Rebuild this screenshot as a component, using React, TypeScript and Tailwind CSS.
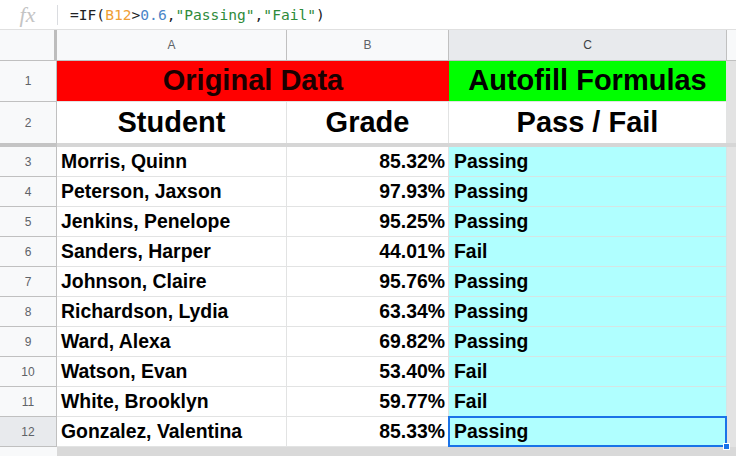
import React from 'react'

const rows = [
    { n: 3, name: 'Morris, Quinn', grade: '85.32%', result: 'Passing' },
    { n: 4, name: 'Peterson, Jaxson', grade: '97.93%', result: 'Passing' },
    { n: 5, name: 'Jenkins, Penelope', grade: '95.25%', result: 'Passing' },
    { n: 6, name: 'Sanders, Harper', grade: '44.01%', result: 'Fail' },
    { n: 7, name: 'Johnson, Claire', grade: '95.76%', result: 'Passing' },
    { n: 8, name: 'Richardson, Lydia', grade: '63.34%', result: 'Passing' },
    { n: 9, name: 'Ward, Alexa', grade: '69.82%', result: 'Passing' },
    { n: 10, name: 'Watson, Evan', grade: '53.40%', result: 'Fail' },
    { n: 11, name: 'White, Brooklyn', grade: '59.77%', result: 'Fail' },
    { n: 12, name: 'Gonzalez, Valentina', grade: '85.33%', result: 'Passing' },
]

export default function App() {
    return (
        <div className="w-[736px] h-[456px] overflow-hidden bg-[#dadada] font-['Liberation_Sans',Arial,sans-serif]">
            {/* Formula bar */}
            <div className="h-[30px] flex items-center bg-white border-b border-[#e0e0e0]">
                <div className="w-[57px] flex items-center justify-center pr-[2px]">
                    <span className="font-['Liberation_Serif',serif] italic text-[22px] text-[#c4c4c4] leading-none">fx</span>
                </div>
                <div className="w-px h-[20px] bg-[#dadce0]" />
                <div className="pl-[12px] font-['DejaVu_Sans_Mono',monospace] text-[14.6px] text-[#202124] whitespace-pre">
                    <span>=IF(</span>
                    <span className="text-[#f09f35]">B12</span>
                    <span>&gt;</span>
                    <span className="text-[#4a86c8]">0.6</span>
                    <span>,</span>
                    <span className="text-[#2e8b3a]">"Passing"</span>
                    <span>,</span>
                    <span className="text-[#2e8b3a]">"Fail"</span>
                    <span>)</span>
                </div>
            </div>

            {/* Column headers */}
            <div className="flex h-[31px] text-[12px] text-[#5f6368]">
                <div className="w-[57px] bg-[#f8f9fa] border-b border-[#c0c0c0] flex justify-end">
                    <div className="w-[3px] bg-[#bdbdbd]" />
                </div>
                <div className="w-[230px] bg-[#f8f9fa] border-b border-r border-[#c0c0c0] flex items-center justify-center">A</div>
                <div className="w-[162px] bg-[#f8f9fa] border-b border-r border-[#c0c0c0] flex items-center justify-center">B</div>
                <div className="w-[278px] bg-[#e8eaed] border-b border-r border-[#c0c0c0] flex items-center justify-center text-[#3c4043]">C</div>
                <div className="flex-1 bg-[#f8f9fa] border-b border-[#c0c0c0]" />
            </div>

            {/* Row 1 */}
            <div className="flex h-[41px]">
                <div className="w-[57px] bg-[#f8f9fa] border-r border-b border-[#c0c0c0] flex items-center justify-center text-[12px] text-[#5f6368]">1</div>
                <div className="w-[392px] bg-[#ff0000] border-b border-[#e2e3e3] flex items-center justify-center text-[29px] font-bold text-[#1a0000]">Original Data</div>
                <div className="w-[278px] bg-[#00ff00] border-b border-r border-[#e2e3e3] flex items-center justify-center text-[29px] font-bold text-black">Autofill Formulas</div>
                <div className="flex-1 bg-[#e3e3e3]" />
            </div>

            {/* Row 2 */}
            <div className="flex h-[41px] text-[29px] font-bold text-black">
                <div className="w-[57px] bg-[#f8f9fa] border-r border-[#c0c0c0] flex items-center justify-center text-[12px] font-normal text-[#5f6368]">2</div>
                <div className="w-[230px] bg-white border-r border-[#e2e3e3] flex items-center justify-center">Student</div>
                <div className="w-[162px] bg-white border-r border-[#e2e3e3] flex items-center justify-center">Grade</div>
                <div className="w-[278px] bg-white border-r border-[#e2e3e3] flex items-center justify-center">Pass / Fail</div>
                <div className="flex-1 bg-[#e3e3e3]" />
            </div>

            {/* Frozen divider */}
            <div className="flex h-[4px]">
                <div className="w-[57px] bg-[#c4c4c4]" />
                <div className="flex-1 bg-[#d6d6d6]" />
            </div>

            {/* Data rows */}
            {rows.map((r) => {
                const selected = r.n === 12
                return (
                    <div key={r.n} className="flex h-[30px] text-[19.4px] font-bold text-black">
                        <div className={`w-[57px] border-r border-b border-[#c0c0c0] flex items-center justify-center text-[12px] font-normal text-[#5f6368] ${selected ? 'bg-[#e8eaed]' : 'bg-[#f8f9fa]'}`}>{r.n}</div>
                        <div className="w-[230px] bg-white border-r border-b border-[#e2e3e3] flex items-center pl-[4px]">{r.name}</div>
                        <div className="w-[162px] bg-white border-r border-b border-[#e2e3e3] flex items-center justify-end pr-[3px]">{r.grade}</div>
                        <div className="relative w-[278px] bg-[#b0ffff] border-r border-b border-[#d6e4e4] flex items-center pl-[5px]">
                            {r.result}
                            {selected && (
                                <>
                                    <div className="absolute -left-[1px] -top-[1px] -right-[1px] -bottom-[1px] border-2 border-[#1a73e8]" />
                                    <div className="absolute -right-[4px] -bottom-[4px] w-[7px] h-[7px] bg-[#1a73e8] border border-white" />
                                </>
                            )}
                        </div>
                        <div className="flex-1 bg-[#e3e3e3]" />
                    </div>
                )
            })}

            {/* Below grid */}
            <div className="flex h-[10px]">
                <div className="w-[57px] bg-[#f8f9fa]" />
                <div className="flex-1 bg-[#d9d9d9]" />
            </div>
        </div>
    )
}
